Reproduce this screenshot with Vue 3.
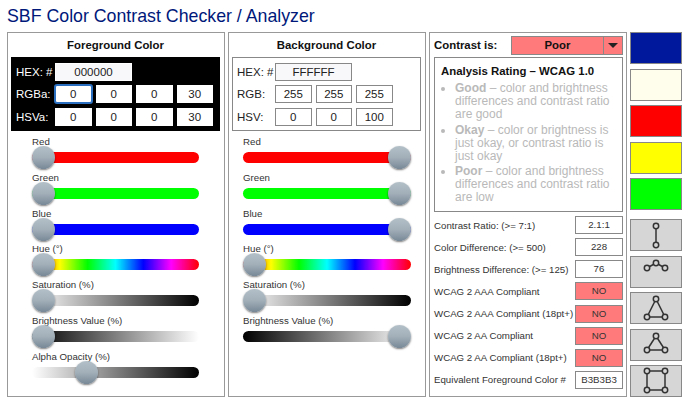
<script setup>
const fgSliders = [
  { label: 'Red', track: '#ff0000', pos: 0 },
  { label: 'Green', track: '#00ff00', pos: 0 },
  { label: 'Blue', track: '#0000ff', pos: 0 },
  { label: 'Hue (°)', track: 'linear-gradient(to right,#f00,#ff0,#0f0,#0ff,#00f,#f0f,#f00)', pos: 0 },
  { label: 'Saturation (%)', track: 'linear-gradient(to right,#fff,#000)', pos: 0 },
  { label: 'Brightness Value (%)', track: 'linear-gradient(to right,#000,#fff)', pos: 0 },
  { label: 'Alpha Opacity (%)', track: 'linear-gradient(to right,#fff,#000)', pos: 30 }
]
const bgSliders = [
  { label: 'Red', track: '#ff0000', pos: 100 },
  { label: 'Green', track: '#00ff00', pos: 100 },
  { label: 'Blue', track: '#0000ff', pos: 100 },
  { label: 'Hue (°)', track: 'linear-gradient(to right,#f00,#ff0,#0f0,#0ff,#00f,#f0f,#f00)', pos: 0 },
  { label: 'Saturation (%)', track: 'linear-gradient(to right,#fff,#000)', pos: 0 },
  { label: 'Brightness Value (%)', track: 'linear-gradient(to right,#000,#fff)', pos: 100 }
]

const ratings = [
  { name: 'Good', text: ' – color and brightness differences and contrast ratio are good' },
  { name: 'Okay', text: ' – color or brightness is just okay, or contrast ratio is just okay' },
  { name: 'Poor', text: ' – color and brightness differences and contrast ratio are low' }
]

const results = [
  { label: 'Contrast Ratio: (>= 7:1)', value: '2.1:1' },
  { label: 'Color Difference: (>= 500)', value: '228' },
  { label: 'Brightness Difference: (>= 125)', value: '76' },
  { label: 'WCAG 2 AAA Compliant', value: 'NO', bad: true },
  { label: 'WCAG 2 AAA Compliant (18pt+)', value: 'NO', bad: true },
  { label: 'WCAG 2 AA Compliant', value: 'NO', bad: true },
  { label: 'WCAG 2 AA Compliant (18pt+)', value: 'NO', bad: true },
  { label: 'Equivalent Foreground Color #', value: 'B3B3B3' }
]

const swatches = ['#00189c', '#fffdeb', '#ff0000', '#ffff00', '#00ff00']

const shapes = [
  { pts: [[26, 7], [26, 26]], lines: [[0, 1]] },
  { pts: [[17, 12], [26, 7], [35, 12]], lines: [[0, 1], [1, 2]] },
  { pts: [[26, 7], [17, 25], [35, 25]], lines: [[0, 1], [1, 2], [2, 0]] },
  { pts: [[26, 7], [17, 21], [35, 21]], lines: [[0, 1], [1, 2], [2, 0]] },
  { pts: [[17, 6], [35, 6], [35, 25], [17, 25]], lines: [[0, 1], [1, 2], [2, 3], [3, 0]] }
]
</script>

<template>
  <div class="page">
    <h1 class="title">SBF Color Contrast Checker / Analyzer</h1>
    <div class="columns">
      <section class="panel">
        <h2>Foreground Color</h2>
        <div class="values dark">
          <div class="row"><span class="lbl">HEX: #</span><input class="field wide" value="000000" /></div>
          <div class="row">
            <span class="lbl">RGBa:</span>
            <input class="field focused" value="0" />
            <input class="field" value="0" />
            <input class="field" value="0" />
            <input class="field" value="30" />
          </div>
          <div class="row">
            <span class="lbl">HSVa:</span>
            <input class="field" value="0" />
            <input class="field" value="0" />
            <input class="field" value="0" />
            <input class="field" value="30" />
          </div>
        </div>
        <div class="sliders fg">
          <div v-for="s in fgSliders" :key="s.label" class="slider">
            <div class="slider-label">{{ s.label }}</div>
            <div class="track" :style="{ background: s.track }">
              <span class="thumb" :style="{ left: `calc((100% - 23px) * ${s.pos / 100})` }"></span>
            </div>
          </div>
        </div>
      </section>

      <section class="panel">
        <h2>Background Color</h2>
        <div class="values light">
          <div class="row"><span class="lbl">HEX: #</span><input class="field wide" value="FFFFFF" /></div>
          <div class="row">
            <span class="lbl">RGB:</span>
            <input class="field" value="255" />
            <input class="field" value="255" />
            <input class="field" value="255" />
          </div>
          <div class="row">
            <span class="lbl">HSV:</span>
            <input class="field" value="0" />
            <input class="field" value="0" />
            <input class="field" value="100" />
          </div>
        </div>
        <div class="sliders bg">
          <div v-for="s in bgSliders" :key="s.label" class="slider">
            <div class="slider-label">{{ s.label }}</div>
            <div class="track" :style="{ background: s.track }">
              <span class="thumb" :style="{ left: `calc((100% - 23px) * ${s.pos / 100})` }"></span>
            </div>
          </div>
        </div>
      </section>

      <section class="panel analysis">
        <div class="verdict">
          <strong>Contrast is:</strong>
          <div class="select">
            <span class="select-text">Poor</span>
            <span class="select-arrow"><i></i></span>
          </div>
        </div>
        <div class="rating">
          <h3>Analysis Rating – WCAG 1.0</h3>
          <ul>
            <li v-for="r in ratings" :key="r.name"><b>{{ r.name }}</b>{{ r.text }}</li>
          </ul>
        </div>
        <div class="results">
          <div v-for="r in results" :key="r.label" class="result">
            <span>{{ r.label }}</span>
            <span class="result-value" :class="{ bad: r.bad }">{{ r.value }}</span>
          </div>
        </div>
      </section>

      <aside class="side">
        <div class="group">
          <button v-for="c in swatches" :key="c" class="swatch" :style="{ background: c }"></button>
        </div>
        <div class="group">
          <button v-for="(shape, i) in shapes" :key="i" class="shape">
            <svg width="52" height="32" viewBox="0 0 52 32">
              <line
                v-for="(l, j) in shape.lines"
                :key="j"
                :x1="shape.pts[l[0]][0]"
                :y1="shape.pts[l[0]][1]"
                :x2="shape.pts[l[1]][0]"
                :y2="shape.pts[l[1]][1]"
                stroke="#333"
                stroke-width="1.5"
              />
              <circle
                v-for="(p, j) in shape.pts"
                :key="'c' + j"
                :cx="p[0]"
                :cy="p[1]"
                r="2.7"
                fill="#d6d6d6"
                stroke="#333"
                stroke-width="1.5"
              />
            </svg>
          </button>
        </div>
      </aside>
    </div>
  </div>
</template>

<style>
html,
body {
  margin: 0;
  background: #fff;
}
</style>

<style scoped>
.page {
  width: 690px;
  height: 408px;
  box-sizing: border-box;
  padding: 5px 8px 0 7px;
  overflow: hidden;
  font-family: "Liberation Sans", Arial, sans-serif;
  color: #222;
}

.title {
  margin: 0 0 5px;
  font-size: 17.75px;
  line-height: 22px;
  font-weight: 400;
  color: #00187a;
}

.columns {
  display: flex;
  gap: 3px;
  height: 365px;
}

.panel {
  box-sizing: border-box;
  border: 1px solid #999;
  padding: 0 4px 0 3px;
  width: 198px;
}

.panel:nth-child(1) {
  width: 218px;
}

.panel h2 {
  margin: 0;
  height: 24px;
  font-size: 11.4px;
  line-height: 25px;
  text-align: center;
  color: #111;
}

.values {
  box-sizing: border-box;
  height: 74px;
  padding: 3.5px 0 0 5px;
  font-size: 11.5px;
}

.dark {
  background: #000;
  color: #fff;
}

.light {
  border: 1px solid #888;
  padding: 2.5px 0 0 4px;
}

.row {
  display: flex;
  gap: 4px;
  height: 22.5px;
  align-items: center;
}

.lbl {
  width: 35px;
  white-space: nowrap;
}

.light .lbl {
  width: 34px;
}

.field {
  box-sizing: border-box;
  width: 36.5px;
  height: 18px;
  padding: 0;
  border: 1px solid #fff;
  background: #fff;
  font: 11.5px "Liberation Sans", Arial, sans-serif;
  color: #222;
  text-align: center;
  outline: none;
}

.wide {
  width: 77px;
  background: #f8f8fa;
}

.light .field {
  border-color: #888;
}

.focused {
  border: 1px solid #2a6fc0;
  border-radius: 2px;
  box-shadow: 0 0 0 1px #2a6fc0;
}

.sliders {
  margin-top: 5px;
}

.fg {
  padding: 0 21px;
}

.bg {
  padding: 0 10px 0 11px;
}

.slider {
  height: 35.8px;
}

.slider-label {
  height: 15px;
  font-size: 9.7px;
  line-height: 12px;
  color: #333;
}

.track {
  position: relative;
  height: 11px;
  border-radius: 6px;
  margin-top: 1px;
}

.thumb {
  position: absolute;
  top: -6px;
  width: 23px;
  height: 23px;
  border-radius: 50%;
  background: linear-gradient(#b4c0c8, #a2afb9 50%, #788896);
  box-shadow: 0 1px 2px rgba(0, 0, 0, 0.5);
}

.analysis {
  padding: 0 3px 0 4px;
  font-size: 9.7px;
}

.verdict {
  display: flex;
  align-items: center;
  justify-content: space-between;
  height: 24px;
  font-size: 11.4px;
  color: #111;
}

.select {
  display: flex;
  box-sizing: border-box;
  width: 112px;
  height: 19px;
  border: 1px solid #888;
  background: #ff7b7b;
}

.select-text {
  flex: 1;
  text-align: center;
  font-weight: 700;
  line-height: 17px;
}

.select-arrow {
  width: 18px;
  border-left: 1px solid #888;
  display: flex;
  align-items: center;
  justify-content: center;
}

.select-arrow i {
  border-left: 5px solid transparent;
  border-right: 5px solid transparent;
  border-top: 5px solid #222;
}

.rating {
  box-sizing: border-box;
  height: 155px;
  border: 1px solid #888;
  padding: 5px 6px;
}

.rating h3 {
  margin: 0 0 3px;
  font-size: 11.4px;
  line-height: 16px;
  color: #111;
}

.rating ul {
  margin: 0;
  padding: 0 0 0 14px;
  color: #b9b9b9;
  font-size: 12px;
  line-height: 13px;
}

.rating li {
  margin-bottom: 2.6px;
}

.results {
  margin-top: 2px;
}

.result {
  display: flex;
  align-items: center;
  justify-content: space-between;
  height: 22.14px;
  white-space: nowrap;
  color: #333;
}

.result-value {
  box-sizing: border-box;
  flex-shrink: 0;
  width: 48px;
  height: 18px;
  border: 1px solid #888;
  text-align: center;
  line-height: 16px;
}

.bad {
  background: #ff7b7b;
}

.side {
  display: flex;
  flex-direction: column;
  justify-content: space-between;
  width: 52px;
}

.group {
  display: flex;
  flex-direction: column;
  gap: 4.5px;
}

.swatch,
.shape {
  box-sizing: border-box;
  display: block;
  width: 52px;
  height: 32px;
  padding: 0;
  border: 1px solid #888;
}

.shape {
  background: #d6d6d6;
}

.shape svg {
  display: block;
  margin: -1px;
}
</style>
